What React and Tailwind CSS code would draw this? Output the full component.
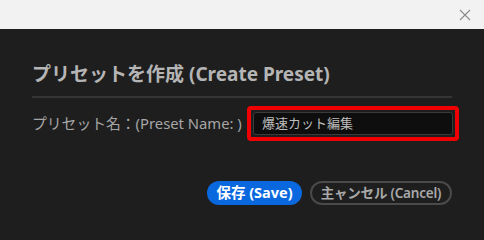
export default function App() {
  return (
    <div
      className="w-[484px] h-[240px] flex flex-col bg-[#1e1e1e] overflow-hidden"
      style={{ fontFamily: '"Noto Sans", "Noto Sans CJK JP", sans-serif' }}
    >
      {/* Title bar */}
      <div className="h-[29px] bg-[#f2f2f2] flex items-center justify-end pr-[10px]">
        <svg width="12" height="12" viewBox="0 0 12 12" className="mr-[3px]">
          <path d="M1 1L11 11M11 1L1 11" stroke="#8a8a8a" strokeWidth="1.1" fill="none" />
        </svg>
      </div>

      {/* Body */}
      <div className="flex flex-col px-[32px] pt-[32px]">
        <h1 className="text-[19px] leading-[26px] font-bold text-[#b5b5b5]">
          プリセットを作成 (Create Preset)
        </h1>
        <div className="mt-[9px] h-[2px] bg-[#353535]" />

        <div className="mt-[8px] flex items-center justify-between -mr-[7px]">
          <span className="text-[14.8px] text-[#a6a6a6]">プリセット名：(Preset Name: )</span>
          <div className="w-[212px] h-[35px] border-[4px] border-[#f00000] rounded-[4px] p-[2px]">
            <div className="h-full bg-[#0e0e0e] border border-[#3a3a3a] rounded-[3px] flex items-center pl-[8px] text-[13px] text-[#bdbdbd]">
              爆速カット編集
            </div>
          </div>
        </div>

        <div className="mt-[40px] flex justify-end gap-[8px]">
          <button className="h-[24px] w-[95px] rounded-full bg-[#0a68df] text-white text-[14.5px] font-bold flex items-center justify-center">
            保存 (Save)
          </button>
          <button className="h-[24px] w-[142px] rounded-full border-2 border-[#4a4a4a] text-[#a8a8a8] text-[13.5px] font-semibold tracking-[-0.2px] flex items-center justify-center whitespace-nowrap">
            主ャンセル (Cancel)
          </button>
        </div>
      </div>
    </div>
  )
}
